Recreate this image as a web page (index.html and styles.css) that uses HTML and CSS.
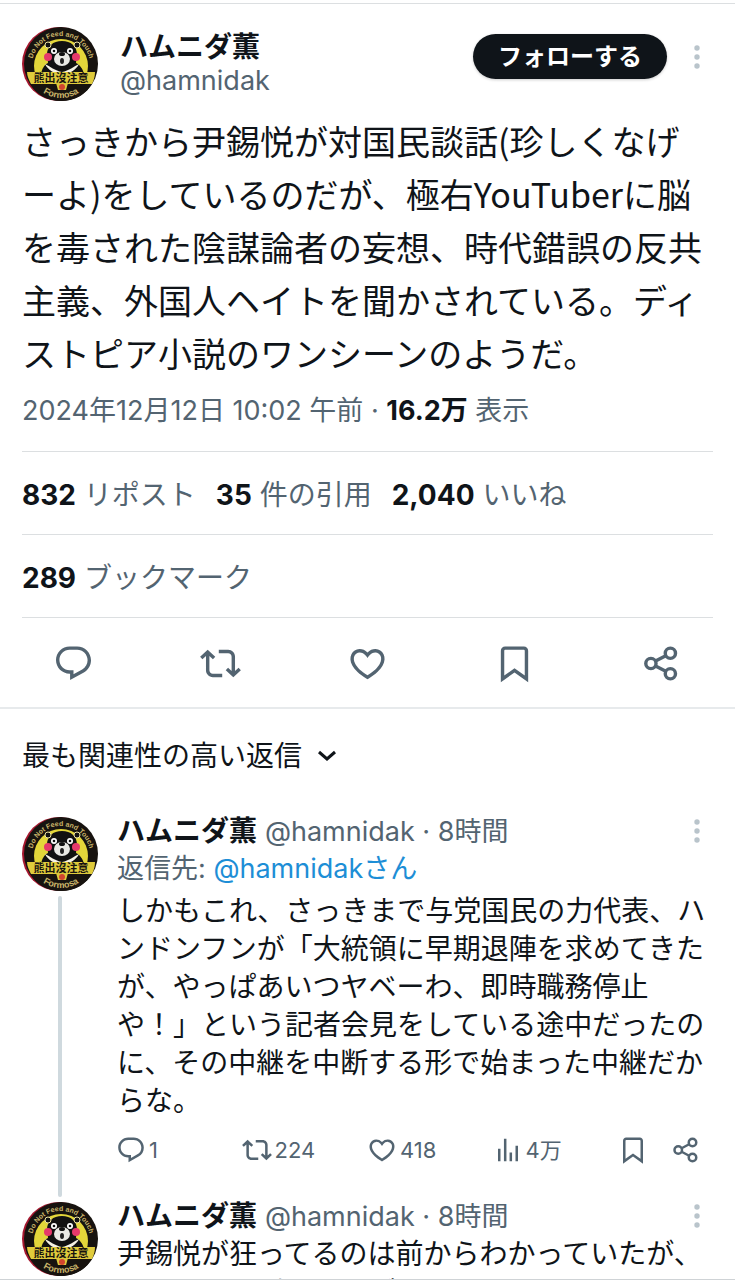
FILE: index.html
```html
<!DOCTYPE html>
<html lang="ja">

<head>
    <meta charset="UTF-8">
    <meta name="viewport" content="width=device-width, initial-scale=1.0">
    <title>ハムニダ薫 @hamnidak</title>
    <link rel="stylesheet" href="styles.css">
</head>

<body>

    <!-- Shared icons -->
    <svg class="sprite" aria-hidden="true">
        <symbol id="avatar" viewBox="0 0 76 76">
            <circle cx="37" cy="38" r="37" fill="#a5182f" />
            <circle cx="39" cy="38" r="37" fill="#17130f" />
            <circle cx="39" cy="40" r="27" fill="#e3d63a" />
            <path d="M8 57h62c-5 11-17 18-31 18S13 68 8 57z" fill="#17130f" />
            <path d="M19 48c1-5 3-9 7-11 0-3-1-5-1-8 0-9 6-14 15-14s15 5 15 14c0 3-1 5-1 8 4 2 7 6 8 11z" fill="#111" />
            <circle cx="26" cy="19" r="3" fill="#111" stroke="#efe3a0" stroke-width="1" />
            <circle cx="55" cy="19" r="3" fill="#111" stroke="#efe3a0" stroke-width="1" />
            <path d="M23 38c5 2 10 7 17 8 7-1 12-6 17-8-3 6-9 10-17 10s-14-4-17-10z" fill="#f4f1e4" />
            <circle cx="32" cy="25" r="3" fill="#fff" />
            <circle cx="48" cy="25" r="3" fill="#fff" />
            <circle cx="32" cy="25" r="1.3" fill="#111" />
            <circle cx="48" cy="25" r="1.3" fill="#111" />
            <ellipse cx="40" cy="33" rx="8" ry="7" fill="#e9e9e4" />
            <ellipse cx="40" cy="28" rx="3" ry="2" fill="#111" />
            <ellipse cx="40" cy="35" rx="2" ry="3" fill="#222" />
            <circle cx="26" cy="31" r="4" fill="#e5396b" />
            <circle cx="54" cy="31" r="4" fill="#e5396b" />
            <path d="M5 46h68c0 4-1 8-3 12H9c-2-4-4-8-4-12z" fill="#e0cb3c" />
            <path d="M34 57h12l-2 7h-8z" fill="#dcc83c" />
            <circle cx="40" cy="61" r="3" fill="#d2452f" />
            <text x="39" y="56" class="avatar-kanji">熊出沒注意</text>
            <path id="arc-top" d="M10 39A29 29 0 0 1 68 39" fill="none" />
            <path id="arc-bottom" d="M6 39A33 33 0 0 0 72 39" fill="none" />
            <text class="avatar-ring"><textPath href="#arc-top" startOffset="50%">Do Not Feed and Touch</textPath></text>
            <text class="avatar-place"><textPath href="#arc-bottom" startOffset="50%">Formosa</textPath></text>
        </symbol>
        <symbol id="reply" viewBox="0 0 24 24">
            <path d="M1.751 10c0-4.42 3.584-8 8.005-8h4.366c4.49 0 8.129 3.64 8.129 8.13 0 2.96-1.607 5.68-4.196 7.11l-8.054 4.46v-3.69h-.067c-4.49.1-8.183-3.51-8.183-8.01zm8.005-6c-3.317 0-6.005 2.69-6.005 6 0 3.37 2.77 6.08 6.138 6.01l.351-.01h1.761v2.3l5.087-2.81c1.951-1.08 3.163-3.13 3.163-5.36 0-3.39-2.744-6.13-6.129-6.13H9.756z" />
        </symbol>
        <symbol id="repost" viewBox="0 0 24 24">
            <path d="M4.5 3.88l4.432 4.14-1.364 1.46L5.5 7.55V16c0 1.1.896 2 2 2H13v2H7.5c-2.209 0-4-1.79-4-4V7.55L1.432 9.48.068 8.02 4.5 3.88zM16.5 6H11V4h5.5c2.209 0 4 1.79 4 4v8.45l2.068-1.93 1.364 1.46-4.432 4.14-4.432-4.14 1.364-1.46 2.068 1.93V8c0-1.1-.896-2-2-2z" />
        </symbol>
        <symbol id="like" viewBox="0 0 24 24">
            <path d="M16.697 5.5c-1.222-.06-2.679.51-3.89 2.16l-.805 1.09-.806-1.09C9.984 6.01 8.526 5.44 7.304 5.5c-1.243.07-2.349.78-2.91 1.91-.552 1.12-.633 2.78.479 4.82 1.074 1.97 3.257 4.27 7.129 6.61 3.87-2.34 6.052-4.64 7.126-6.61 1.111-2.04 1.03-3.7.477-4.82-.561-1.13-1.666-1.84-2.908-1.91zm4.187 7.69c-1.351 2.48-4.001 5.12-8.379 7.67l-.503.3-.504-.3c-4.379-2.55-7.029-5.19-8.382-7.67-1.36-2.5-1.41-4.86-.514-6.67.887-1.79 2.647-2.91 4.601-3.01 1.651-.09 3.368.56 4.798 2.01 1.429-1.45 3.146-2.1 4.796-2.01 1.954.1 3.714 1.22 4.601 3.01.896 1.81.846 4.17-.514 6.67z" />
        </symbol>
        <symbol id="views" viewBox="0 0 24 24">
            <path d="M8.75 21V3h2v18h-2zM18 21V8.5h2V21h-2zM4 21l.004-10h2L6 21H4zm9.248 0v-7h2v7h-2z" />
        </symbol>
        <symbol id="bookmark" viewBox="0 0 24 24">
            <path d="M4 4.5C4 3.12 5.119 2 6.5 2h11C18.881 2 20 3.12 20 4.5v18.44l-8-5.71-8 5.71V4.5zM6.5 4c-.276 0-.5.22-.5.5v14.56l6-4.29 6 4.29V4.5c0-.28-.224-.5-.5-.5h-11z" />
        </symbol>
        <symbol id="share" viewBox="0 0 24 24">
            <g fill="none" stroke="currentColor" stroke-width="2">
                <circle cx="17.2" cy="6" r="3" />
                <circle cx="5.8" cy="12" r="3" />
                <circle cx="17.2" cy="18" r="3" />
                <path d="M8.5 10.6l6-3.2M8.5 13.4l6 3.2" />
            </g>
        </symbol>
        <symbol id="more" viewBox="0 0 6 24">
            <circle cx="3" cy="3" r="2.7" />
            <circle cx="3" cy="12" r="2.7" />
            <circle cx="3" cy="21" r="2.7" />
        </symbol>
    </svg>

    <main class="feed">

        <!-- Main post -->
        <article class="post">
            <header class="post-header">
                <svg class="avatar"><use href="#avatar" /></svg>
                <div class="author">
                    <span class="name">ハムニダ薫</span>
                    <span class="handle">@hamnidak</span>
                </div>
                <button class="follow">フォローする</button>
                <button class="more" aria-label="もっと見る"><svg><use href="#more" /></svg></button>
            </header>

            <p class="post-text">さっきから尹錫悦が対国民談話(珍しくなげーよ)をしているのだが、極右YouTuberに脳を毒された陰謀論者の妄想、時代錯誤の反共主義、外国人ヘイトを聞かされている。ディストピア小説のワンシーンのようだ。</p>
            <p class="meta">2024年12月12日 10:02 午前 · <strong>16.2万</strong> 表示</p>

            <div class="stats">
                <span><strong>832</strong> リポスト</span>
                <span><strong>35</strong> 件の引用</span>
                <span><strong>2,040</strong> いいね</span>
            </div>
            <div class="stats">
                <span><strong>289</strong> ブックマーク</span>
            </div>
        </article>

        <div class="post-actions">
            <button aria-label="返信"><svg><use href="#reply" /></svg></button>
            <button aria-label="リポスト"><svg><use href="#repost" /></svg></button>
            <button aria-label="いいね"><svg><use href="#like" /></svg></button>
            <button aria-label="ブックマーク"><svg><use href="#bookmark" /></svg></button>
            <button aria-label="共有"><svg><use href="#share" /></svg></button>
        </div>

        <!-- Reply sorting -->
        <label class="sort">
            <select aria-label="返信の並べ替え">
                <option>最も関連性の高い返信</option>
                <option>最新の返信</option>
            </select>
            <svg viewBox="0 0 20 12"><path d="M2 2l8 7 8-7" /></svg>
        </label>

        <!-- Replies -->
        <article class="reply">
            <div class="thread">
                <svg class="avatar"><use href="#avatar" /></svg>
                <div class="thread-line"></div>
            </div>
            <div class="reply-body">
                <header class="reply-header">
                    <p><span class="name">ハムニダ薫</span> <span class="handle">@hamnidak · 8時間</span></p>
                    <button class="more" aria-label="もっと見る"><svg><use href="#more" /></svg></button>
                </header>
                <p class="reply-to">返信先: <a href="#">@hamnidakさん</a></p>
                <p class="reply-text">しかもこれ、さっきまで与党国民の力代表、ハンドンフンが「大統領に早期退陣を求めてきたが、やっぱあいつヤベーわ、即時職務停止や！」という記者会見をしている途中だったのに、その中継を中断する形で始まった中継だからな。</p>
                <div class="reply-actions">
                    <button aria-label="返信"><svg><use href="#reply" /></svg>1</button>
                    <button aria-label="リポスト"><svg><use href="#repost" /></svg>224</button>
                    <button aria-label="いいね"><svg><use href="#like" /></svg>418</button>
                    <button aria-label="表示"><svg><use href="#views" /></svg>4万</button>
                    <div class="reply-tools">
                        <button aria-label="ブックマーク"><svg><use href="#bookmark" /></svg></button>
                        <button aria-label="共有"><svg><use href="#share" /></svg></button>
                    </div>
                </div>
            </div>
        </article>

        <article class="reply">
            <div class="thread">
                <svg class="avatar"><use href="#avatar" /></svg>
            </div>
            <div class="reply-body">
                <header class="reply-header">
                    <p><span class="name">ハムニダ薫</span> <span class="handle">@hamnidak · 8時間</span></p>
                    <button class="more" aria-label="もっと見る"><svg><use href="#more" /></svg></button>
                </header>
                <p class="reply-text">尹錫悦が狂ってるのは前からわかっていたが、これまでのピントはずれても頭は</p>
            </div>
        </article>

    </main>

</body>

</html>
```
FILE: styles.css
```css
* {
    box-sizing: border-box;
}

body {
    margin: 0;
    background-color: #fff;
    color: #0f1419;
    font-family: Inter, "Noto Sans CJK JP", sans-serif;
    font-size: 28px;
    line-height: 38px;
}

p {
    margin: 0;
}

button {
    padding: 0;
    border: none;
    background: none;
    color: #536471;
    font-family: inherit;
    cursor: pointer;
}

svg {
    display: block;
    fill: currentColor;
}

.sprite {
    position: absolute;
    width: 0;
    height: 0;
}

.feed {
    height: 100vh;
    overflow: hidden;
    padding-top: 3px;
    border-bottom: 1px solid #cfd3d6;
}

/* Main post */
.post {
    padding: 22px 22px 0;
    border-top: 1px solid #dcdfe1;
}

.post-header {
    display: flex;
    align-items: flex-start;
    gap: 22px;
}

.avatar {
    flex: none;
    width: 76px;
    height: 76px;
}

.avatar-kanji {
    font: bold 11px "Noto Sans CJK JP", sans-serif;
    text-anchor: middle;
    fill: #17130f;
}

.avatar-ring {
    font: bold 7px "Liberation Sans", sans-serif;
    text-anchor: middle;
    fill: #c9b36a;
}

.avatar-place {
    font: bold 9px "Liberation Sans", sans-serif;
    text-anchor: middle;
    fill: #c9b36a;
}

.author {
    display: flex;
    flex: 1;
    flex-direction: column;
    line-height: 34px;
    padding-top: 4px;
}

.name {
    font-weight: bold;
}

.handle {
    color: #536471;
    font-size: 27px;
}

.follow {
    margin-top: 8px;
    padding: 0 25px;
    border-radius: 23px;
    background-color: #0f1419;
    color: #fff;
    font-size: 24px;
    font-weight: bold;
    line-height: 45px;
    box-shadow: 0 1px 3px rgba(0, 0, 0, 0.2);
}

.more {
    width: 18px;
    color: #b9c4cb;
}

.more svg {
    width: 6px;
    height: 24px;
    margin: 0 auto;
}

.post-header .more {
    margin: 19px 7px 0 -1px;
}

.post-text {
    margin-top: 12px;
    font-family: "Noto Sans CJK JP", sans-serif;
    font-size: 34px;
    line-height: 53px;
}

.meta {
    padding: 13px 0 21px;
    color: #536471;
    font-size: 27px;
}

.meta strong,
.stats strong {
    color: #0f1419;
}

.stats {
    display: flex;
    gap: 20px;
    padding: 24px 0 20px;
    border-top: 1px solid #dcdfe1;
    color: #536471;
    font-size: 28px;
}

.post-actions {
    display: grid;
    grid-template-columns: repeat(5, 1fr);
    justify-items: center;
    padding: 26px 0 23px;
    border-bottom: 2px solid #e7eaec;
    position: relative;
}

/* Inset rule above the action buttons */
.post-actions::before {
    content: "";
    position: absolute;
    top: 0;
    left: 22px;
    right: 22px;
    border-top: 1px solid #dcdfe1;
}

.post-actions svg {
    width: 41px;
    height: 41px;
}

/* Reply sorting */
.sort {
    display: flex;
    align-items: center;
    gap: 14px;
    padding: 28px 22px 41px;
}

.sort select {
    appearance: none;
    padding: 0;
    border: none;
    background: none;
    color: #0f1419;
    font-family: inherit;
    font-size: 28px;
    line-height: 38px;
}

.sort svg {
    width: 20px;
    height: 12px;
    fill: none;
    stroke: #0f1419;
    stroke-width: 3;
}

/* Replies */
.reply {
    display: flex;
    gap: 19px;
    padding: 0 22px;
}

.thread {
    display: flex;
    flex-direction: column;
    align-items: center;
    gap: 4px;
}

.thread-line {
    flex: 1;
    width: 4px;
    margin-bottom: 4px;
    border-radius: 2px;
    background-color: #cfd9de;
}

.reply-body {
    flex: 1;
    min-width: 0;
}

.reply-header {
    display: flex;
    justify-content: space-between;
    align-items: center;
    height: 30px;
    margin-bottom: 4px;
    padding-right: 7px;
}

.reply-to {
    height: 42px;
    color: #536471;
    font-size: 27px;
}

.reply-to a {
    color: #1d8ed6;
    text-decoration: none;
}

.reply-text {
    font-size: 28px;
    line-height: 38px;
}

.reply-actions {
    display: grid;
    grid-template-columns: repeat(4, 1fr) auto;
    align-items: center;
    margin: 0 12px 0 -1px;
    padding: 15px 0 36px;
}

.reply-actions button {
    display: flex;
    align-items: center;
    gap: 3px;
    font-size: 22px;
    line-height: 30px;
}

.reply-actions svg {
    width: 30px;
    height: 30px;
}

.reply-tools {
    display: flex;
    gap: 23px;
}
```
